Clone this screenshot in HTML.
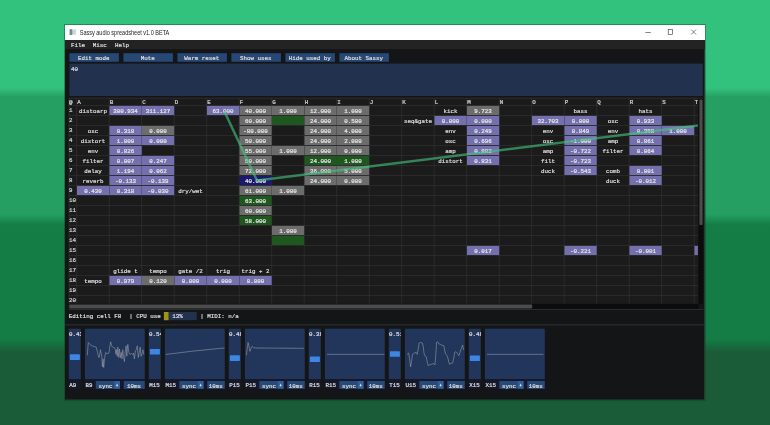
<!DOCTYPE html>
<html lang="en"><head><meta charset="utf-8"><title>Sassy audio spreadsheet v1.0 BETA</title>
<style>
html,body{margin:0;padding:0;background:#1b5c38;overflow:hidden}
svg{display:block;will-change:transform}
.m{font-family:"Liberation Mono","DejaVu Sans Mono",monospace;font-size:5.83px;stroke-width:0.22px}
.t{font-family:"Liberation Sans","DejaVu Sans",sans-serif;font-size:6.3px}
</style></head><body>
<svg width="770" height="425" viewBox="0 0 770 425">
<defs>
<linearGradient id="bg" x1="0" y1="0" x2="0" y2="425" gradientUnits="userSpaceOnUse">
<stop offset="0.0000" stop-color="#33c17e"/>
<stop offset="0.2071" stop-color="#33c17e"/>
<stop offset="0.2282" stop-color="#25a062"/>
<stop offset="0.5035" stop-color="#25a062"/>
<stop offset="0.5294" stop-color="#137d45"/>
<stop offset="0.7976" stop-color="#137d45"/>
<stop offset="0.8282" stop-color="#1b5c38"/>
<stop offset="1.0000" stop-color="#1b5c38"/>
</linearGradient>
<clipPath id="gridclip"><rect x="68.5" y="98" width="629.4" height="205.6"/></clipPath>
</defs>
<rect x="0.00" y="0.00" width="770.00" height="425.00" fill="url(#bg)"/>
<rect x="65.00" y="25.00" width="640.00" height="375.00" fill="#141517"/>
<rect x="704.50" y="40.00" width="0.50" height="360.00" fill="#3a6a50"/>
<rect x="65.00" y="399.50" width="640.00" height="0.50" fill="#2a4a38"/>
<rect x="64.5" y="24.5" width="640.8" height="375.8" fill="none" stroke="#0a3a22" stroke-opacity="0.45" stroke-width="0.9"/>
<rect x="65.00" y="25.00" width="640.00" height="15.10" fill="#ffffff"/>
<rect x="69.60" y="29.20" width="6.40" height="5.80" fill="#dfe6e6"/>
<rect x="69.60" y="29.20" width="2.60" height="5.80" fill="#6f8f8f"/>
<rect x="72.20" y="30.40" width="1.20" height="3.40" fill="#a8bcbc"/>
<rect x="74.40" y="29.60" width="1.00" height="5.00" fill="#c0cccc"/>
<text class="t" x="79.7" y="34.9" fill="#222" textLength="89.6" lengthAdjust="spacingAndGlyphs">Sassy audio spreadsheet v1.0 BETA</text>
<g stroke="#333" stroke-width="0.6" fill="none">
<line x1="645.4" y1="32.5" x2="650.8" y2="32.5"/>
<rect x="668.2" y="29.5" width="4.4" height="4.9"/>
<path d="M691.2 29.5 L696 34.5 M696 29.5 L691.2 34.5"/>
</g>
<rect x="65.00" y="40.10" width="640.00" height="9.10" fill="#232324"/>
<text class="m" x="70.90" y="46.70" fill="#dcdcdc" stroke="#dcdcdc">File</text>
<text class="m" x="92.80" y="46.70" fill="#dcdcdc" stroke="#dcdcdc">Misc</text>
<text class="m" x="115.00" y="46.70" fill="#dcdcdc" stroke="#dcdcdc">Help</text>
<rect x="69.40" y="53.20" width="49.50" height="8.60" fill="#274875"/>
<text class="m" x="93.75" y="59.50" text-anchor="middle" fill="#dcdcdc" stroke="#dcdcdc">Edit mode</text>
<rect x="123.40" y="53.20" width="49.50" height="8.60" fill="#274875"/>
<text class="m" x="147.75" y="59.50" text-anchor="middle" fill="#dcdcdc" stroke="#dcdcdc">Mute</text>
<rect x="177.40" y="53.20" width="49.50" height="8.60" fill="#274875"/>
<text class="m" x="201.75" y="59.50" text-anchor="middle" fill="#dcdcdc" stroke="#dcdcdc">Warm reset</text>
<rect x="231.40" y="53.20" width="49.50" height="8.60" fill="#274875"/>
<text class="m" x="255.75" y="59.50" text-anchor="middle" fill="#dcdcdc" stroke="#dcdcdc">Show uses</text>
<rect x="285.40" y="53.20" width="49.50" height="8.60" fill="#274875"/>
<text class="m" x="309.75" y="59.50" text-anchor="middle" fill="#dcdcdc" stroke="#dcdcdc">Hide used by</text>
<rect x="339.40" y="53.20" width="49.50" height="8.60" fill="#274875"/>
<text class="m" x="363.75" y="59.50" text-anchor="middle" fill="#dcdcdc" stroke="#dcdcdc">About Sassy</text>
<rect x="69.40" y="63.60" width="633.40" height="32.40" fill="#21314e"/>
<text class="m" x="70.90" y="71.40" fill="#dcdcdc" stroke="#dcdcdc">40</text>
<rect x="68.50" y="98.00" width="630.00" height="205.80" fill="#1b1b1c"/>
<rect x="698.60" y="98.00" width="4.40" height="205.80" fill="#0c0c0d"/>
<rect x="699.40" y="99.50" width="3.20" height="125.60" fill="#4c4c4c" rx="1"/>
<rect x="68.50" y="304.00" width="630.00" height="4.80" fill="#0c0c0d"/>
<rect x="69.20" y="304.50" width="463.00" height="3.90" fill="#4c4c4c" rx="1"/>
<path d="M703.2 98.1 L69.2 98.1 L69.2 309.5 L703.4 309.5" fill="none" stroke="#3c3c40" stroke-width="0.6"/>
<g clip-path="url(#gridclip)">
<g stroke="#3a3a3a" stroke-width="0.5">
<line x1="76.70" y1="98" x2="76.70" y2="304"/>
<line x1="109.20" y1="98" x2="109.20" y2="304"/>
<line x1="141.70" y1="98" x2="141.70" y2="304"/>
<line x1="174.20" y1="98" x2="174.20" y2="304"/>
<line x1="206.70" y1="98" x2="206.70" y2="304"/>
<line x1="239.20" y1="98" x2="239.20" y2="304"/>
<line x1="271.70" y1="98" x2="271.70" y2="304"/>
<line x1="304.20" y1="98" x2="304.20" y2="304"/>
<line x1="336.70" y1="98" x2="336.70" y2="304"/>
<line x1="369.20" y1="98" x2="369.20" y2="304"/>
<line x1="401.70" y1="98" x2="401.70" y2="304"/>
<line x1="434.20" y1="98" x2="434.20" y2="304"/>
<line x1="466.70" y1="98" x2="466.70" y2="304"/>
<line x1="499.20" y1="98" x2="499.20" y2="304"/>
<line x1="531.70" y1="98" x2="531.70" y2="304"/>
<line x1="564.20" y1="98" x2="564.20" y2="304"/>
<line x1="596.70" y1="98" x2="596.70" y2="304"/>
<line x1="629.20" y1="98" x2="629.20" y2="304"/>
<line x1="661.70" y1="98" x2="661.70" y2="304"/>
<line x1="694.20" y1="98" x2="694.20" y2="304"/>
<line x1="726.70" y1="98" x2="726.70" y2="304"/>
<line x1="68.5" y1="105.55" x2="698.5" y2="105.55"/>
<line x1="68.5" y1="115.55" x2="698.5" y2="115.55"/>
<line x1="68.5" y1="125.55" x2="698.5" y2="125.55"/>
<line x1="68.5" y1="135.55" x2="698.5" y2="135.55"/>
<line x1="68.5" y1="145.55" x2="698.5" y2="145.55"/>
<line x1="68.5" y1="155.55" x2="698.5" y2="155.55"/>
<line x1="68.5" y1="165.55" x2="698.5" y2="165.55"/>
<line x1="68.5" y1="175.55" x2="698.5" y2="175.55"/>
<line x1="68.5" y1="185.55" x2="698.5" y2="185.55"/>
<line x1="68.5" y1="195.55" x2="698.5" y2="195.55"/>
<line x1="68.5" y1="205.55" x2="698.5" y2="205.55"/>
<line x1="68.5" y1="215.55" x2="698.5" y2="215.55"/>
<line x1="68.5" y1="225.55" x2="698.5" y2="225.55"/>
<line x1="68.5" y1="235.55" x2="698.5" y2="235.55"/>
<line x1="68.5" y1="245.55" x2="698.5" y2="245.55"/>
<line x1="68.5" y1="255.55" x2="698.5" y2="255.55"/>
<line x1="68.5" y1="265.55" x2="698.5" y2="265.55"/>
<line x1="68.5" y1="275.55" x2="698.5" y2="275.55"/>
<line x1="68.5" y1="285.55" x2="698.5" y2="285.55"/>
<line x1="68.5" y1="295.55" x2="698.5" y2="295.55"/>
<line x1="68.5" y1="305.55" x2="698.5" y2="305.55"/>
<line x1="68.5" y1="315.55" x2="698.5" y2="315.55"/>
</g>
<text class="m" x="69.00" y="104.20" fill="#d0d0d0" stroke="#d0d0d0">@</text>
<text class="m" x="77.30" y="104.20" fill="#d0d0d0" stroke="#d0d0d0">A</text>
<text class="m" x="109.80" y="104.20" fill="#d0d0d0" stroke="#d0d0d0">B</text>
<text class="m" x="142.30" y="104.20" fill="#d0d0d0" stroke="#d0d0d0">C</text>
<text class="m" x="174.80" y="104.20" fill="#d0d0d0" stroke="#d0d0d0">D</text>
<text class="m" x="207.30" y="104.20" fill="#d0d0d0" stroke="#d0d0d0">E</text>
<text class="m" x="239.80" y="104.20" fill="#d0d0d0" stroke="#d0d0d0">F</text>
<text class="m" x="272.30" y="104.20" fill="#d0d0d0" stroke="#d0d0d0">G</text>
<text class="m" x="304.80" y="104.20" fill="#d0d0d0" stroke="#d0d0d0">H</text>
<text class="m" x="337.30" y="104.20" fill="#d0d0d0" stroke="#d0d0d0">I</text>
<text class="m" x="369.80" y="104.20" fill="#d0d0d0" stroke="#d0d0d0">J</text>
<text class="m" x="402.30" y="104.20" fill="#d0d0d0" stroke="#d0d0d0">K</text>
<text class="m" x="434.80" y="104.20" fill="#d0d0d0" stroke="#d0d0d0">L</text>
<text class="m" x="467.30" y="104.20" fill="#d0d0d0" stroke="#d0d0d0">M</text>
<text class="m" x="499.80" y="104.20" fill="#d0d0d0" stroke="#d0d0d0">N</text>
<text class="m" x="532.30" y="104.20" fill="#d0d0d0" stroke="#d0d0d0">O</text>
<text class="m" x="564.80" y="104.20" fill="#d0d0d0" stroke="#d0d0d0">P</text>
<text class="m" x="597.30" y="104.20" fill="#d0d0d0" stroke="#d0d0d0">Q</text>
<text class="m" x="629.80" y="104.20" fill="#d0d0d0" stroke="#d0d0d0">R</text>
<text class="m" x="662.30" y="104.20" fill="#d0d0d0" stroke="#d0d0d0">S</text>
<text class="m" x="694.80" y="104.20" fill="#d0d0d0" stroke="#d0d0d0">T</text>
<text class="m" x="69.00" y="112.30" fill="#d0d0d0" stroke="#d0d0d0">1</text>
<text class="m" x="69.00" y="122.30" fill="#d0d0d0" stroke="#d0d0d0">2</text>
<text class="m" x="69.00" y="132.30" fill="#d0d0d0" stroke="#d0d0d0">3</text>
<text class="m" x="69.00" y="142.30" fill="#d0d0d0" stroke="#d0d0d0">4</text>
<text class="m" x="69.00" y="152.30" fill="#d0d0d0" stroke="#d0d0d0">5</text>
<text class="m" x="69.00" y="162.30" fill="#d0d0d0" stroke="#d0d0d0">6</text>
<text class="m" x="69.00" y="172.30" fill="#d0d0d0" stroke="#d0d0d0">7</text>
<text class="m" x="69.00" y="182.30" fill="#d0d0d0" stroke="#d0d0d0">8</text>
<text class="m" x="69.00" y="192.30" fill="#d0d0d0" stroke="#d0d0d0">9</text>
<text class="m" x="68.90" y="202.30" fill="#d0d0d0" stroke="#d0d0d0" textLength="7.0" lengthAdjust="spacingAndGlyphs">10</text>
<text class="m" x="68.90" y="212.30" fill="#d0d0d0" stroke="#d0d0d0" textLength="7.0" lengthAdjust="spacingAndGlyphs">11</text>
<text class="m" x="68.90" y="222.30" fill="#d0d0d0" stroke="#d0d0d0" textLength="7.0" lengthAdjust="spacingAndGlyphs">12</text>
<text class="m" x="68.90" y="232.30" fill="#d0d0d0" stroke="#d0d0d0" textLength="7.0" lengthAdjust="spacingAndGlyphs">13</text>
<text class="m" x="68.90" y="242.30" fill="#d0d0d0" stroke="#d0d0d0" textLength="7.0" lengthAdjust="spacingAndGlyphs">14</text>
<text class="m" x="68.90" y="252.30" fill="#d0d0d0" stroke="#d0d0d0" textLength="7.0" lengthAdjust="spacingAndGlyphs">15</text>
<text class="m" x="68.90" y="262.30" fill="#d0d0d0" stroke="#d0d0d0" textLength="7.0" lengthAdjust="spacingAndGlyphs">16</text>
<text class="m" x="68.90" y="272.30" fill="#d0d0d0" stroke="#d0d0d0" textLength="7.0" lengthAdjust="spacingAndGlyphs">17</text>
<text class="m" x="68.90" y="282.30" fill="#d0d0d0" stroke="#d0d0d0" textLength="7.0" lengthAdjust="spacingAndGlyphs">18</text>
<text class="m" x="68.90" y="292.30" fill="#d0d0d0" stroke="#d0d0d0" textLength="7.0" lengthAdjust="spacingAndGlyphs">19</text>
<text class="m" x="68.90" y="302.30" fill="#d0d0d0" stroke="#d0d0d0" textLength="7.0" lengthAdjust="spacingAndGlyphs">20</text>
<rect x="109.45" y="105.90" width="32.25" height="9.10" fill="#7470ae"/>
<rect x="141.95" y="105.90" width="32.25" height="9.10" fill="#7470ae"/>
<rect x="206.95" y="105.90" width="32.25" height="9.10" fill="#7470ae"/>
<rect x="239.45" y="105.90" width="32.25" height="9.10" fill="#6c6c6c"/>
<rect x="271.95" y="105.90" width="32.25" height="9.10" fill="#6c6c6c"/>
<rect x="304.45" y="105.90" width="32.25" height="9.10" fill="#6c6c6c"/>
<rect x="336.95" y="105.90" width="32.25" height="9.10" fill="#6c6c6c"/>
<rect x="466.95" y="105.90" width="32.25" height="9.10" fill="#6c6c6c"/>
<rect x="239.45" y="115.90" width="32.25" height="9.10" fill="#6c6c6c"/>
<rect x="271.95" y="115.90" width="32.25" height="9.10" fill="#1f581f"/>
<rect x="304.45" y="115.90" width="32.25" height="9.10" fill="#6c6c6c"/>
<rect x="336.95" y="115.90" width="32.25" height="9.10" fill="#6c6c6c"/>
<rect x="434.45" y="115.90" width="32.25" height="9.10" fill="#7470ae"/>
<rect x="466.95" y="115.90" width="32.25" height="9.10" fill="#7470ae"/>
<rect x="531.95" y="115.90" width="32.25" height="9.10" fill="#7470ae"/>
<rect x="564.45" y="115.90" width="32.25" height="9.10" fill="#7470ae"/>
<rect x="629.45" y="115.90" width="32.25" height="9.10" fill="#7470ae"/>
<rect x="109.45" y="125.90" width="32.25" height="9.10" fill="#7470ae"/>
<rect x="141.95" y="125.90" width="32.25" height="9.10" fill="#6c6c6c"/>
<rect x="239.45" y="125.90" width="32.25" height="9.10" fill="#6c6c6c"/>
<rect x="304.45" y="125.90" width="32.25" height="9.10" fill="#6c6c6c"/>
<rect x="336.95" y="125.90" width="32.25" height="9.10" fill="#6c6c6c"/>
<rect x="466.95" y="125.90" width="32.25" height="9.10" fill="#7470ae"/>
<rect x="564.45" y="125.90" width="32.25" height="9.10" fill="#7470ae"/>
<rect x="629.45" y="125.90" width="32.25" height="9.10" fill="#7470ae"/>
<rect x="661.95" y="125.90" width="32.25" height="9.10" fill="#7470ae"/>
<rect x="109.45" y="135.90" width="32.25" height="9.10" fill="#7470ae"/>
<rect x="141.95" y="135.90" width="32.25" height="9.10" fill="#7470ae"/>
<rect x="239.45" y="135.90" width="32.25" height="9.10" fill="#6c6c6c"/>
<rect x="304.45" y="135.90" width="32.25" height="9.10" fill="#6c6c6c"/>
<rect x="336.95" y="135.90" width="32.25" height="9.10" fill="#6c6c6c"/>
<rect x="466.95" y="135.90" width="32.25" height="9.10" fill="#7470ae"/>
<rect x="564.45" y="135.90" width="32.25" height="9.10" fill="#7470ae"/>
<rect x="629.45" y="135.90" width="32.25" height="9.10" fill="#7470ae"/>
<rect x="109.45" y="145.90" width="32.25" height="9.10" fill="#7470ae"/>
<rect x="239.45" y="145.90" width="32.25" height="9.10" fill="#6c6c6c"/>
<rect x="271.95" y="145.90" width="32.25" height="9.10" fill="#6c6c6c"/>
<rect x="304.45" y="145.90" width="32.25" height="9.10" fill="#6c6c6c"/>
<rect x="336.95" y="145.90" width="32.25" height="9.10" fill="#6c6c6c"/>
<rect x="466.95" y="145.90" width="32.25" height="9.10" fill="#7470ae"/>
<rect x="564.45" y="145.90" width="32.25" height="9.10" fill="#7470ae"/>
<rect x="629.45" y="145.90" width="32.25" height="9.10" fill="#7470ae"/>
<rect x="109.45" y="155.90" width="32.25" height="9.10" fill="#7470ae"/>
<rect x="141.95" y="155.90" width="32.25" height="9.10" fill="#7470ae"/>
<rect x="239.45" y="155.90" width="32.25" height="9.10" fill="#6c6c6c"/>
<rect x="304.45" y="155.90" width="32.60" height="9.10" fill="#1f581f"/>
<rect x="336.95" y="155.90" width="32.25" height="9.10" fill="#1f581f"/>
<rect x="466.95" y="155.90" width="32.25" height="9.10" fill="#7470ae"/>
<rect x="564.45" y="155.90" width="32.25" height="9.10" fill="#7470ae"/>
<rect x="109.45" y="165.90" width="32.25" height="9.10" fill="#7470ae"/>
<rect x="141.95" y="165.90" width="32.25" height="9.10" fill="#7470ae"/>
<rect x="239.45" y="165.90" width="32.25" height="9.10" fill="#6c6c6c"/>
<rect x="304.45" y="165.90" width="32.25" height="9.10" fill="#6c6c6c"/>
<rect x="336.95" y="165.90" width="32.25" height="9.10" fill="#6c6c6c"/>
<rect x="564.45" y="165.90" width="32.25" height="9.10" fill="#7470ae"/>
<rect x="629.45" y="165.90" width="32.25" height="9.10" fill="#7470ae"/>
<rect x="109.45" y="175.90" width="32.25" height="9.10" fill="#7470ae"/>
<rect x="141.95" y="175.90" width="32.25" height="9.10" fill="#7470ae"/>
<rect x="239.45" y="175.90" width="32.25" height="9.10" fill="#1b1870"/>
<rect x="304.45" y="175.90" width="32.25" height="9.10" fill="#6c6c6c"/>
<rect x="336.95" y="175.90" width="32.25" height="9.10" fill="#6c6c6c"/>
<rect x="629.45" y="175.90" width="32.25" height="9.10" fill="#7470ae"/>
<rect x="76.95" y="185.90" width="32.25" height="9.10" fill="#7470ae"/>
<rect x="109.45" y="185.90" width="32.25" height="9.10" fill="#7470ae"/>
<rect x="141.95" y="185.90" width="32.25" height="9.10" fill="#7470ae"/>
<rect x="239.45" y="185.90" width="32.25" height="9.10" fill="#6c6c6c"/>
<rect x="271.95" y="185.90" width="32.25" height="9.10" fill="#6c6c6c"/>
<rect x="239.45" y="195.90" width="32.25" height="9.10" fill="#1f581f"/>
<rect x="239.45" y="205.90" width="32.25" height="9.10" fill="#6c6c6c"/>
<rect x="239.45" y="215.90" width="32.25" height="9.10" fill="#1f581f"/>
<rect x="271.95" y="225.90" width="32.25" height="9.10" fill="#6c6c6c"/>
<rect x="271.95" y="235.90" width="32.25" height="9.10" fill="#1f581f"/>
<rect x="466.95" y="245.90" width="32.25" height="9.10" fill="#7470ae"/>
<rect x="564.45" y="245.90" width="32.25" height="9.10" fill="#7470ae"/>
<rect x="629.45" y="245.90" width="32.25" height="9.10" fill="#7470ae"/>
<rect x="694.45" y="245.90" width="32.25" height="9.10" fill="#7470ae"/>
<rect x="109.45" y="275.90" width="32.25" height="9.10" fill="#7470ae"/>
<rect x="141.95" y="275.90" width="32.25" height="9.10" fill="#6c6c6c"/>
<rect x="174.45" y="275.90" width="32.25" height="9.10" fill="#7470ae"/>
<rect x="206.95" y="275.90" width="32.25" height="9.10" fill="#7470ae"/>
<rect x="239.45" y="275.90" width="32.25" height="9.10" fill="#7470ae"/>
<text class="m" x="93.00" y="113.00" text-anchor="middle" fill="#dadada" stroke="#dadada">distoarp</text>
<text class="m" x="125.50" y="113.00" text-anchor="middle" fill="#e4e4e4" stroke="#e4e4e4">300.934</text>
<text class="m" x="158.00" y="113.00" text-anchor="middle" fill="#e4e4e4" stroke="#e4e4e4">311.127</text>
<text class="m" x="223.00" y="113.00" text-anchor="middle" fill="#e4e4e4" stroke="#e4e4e4">63.000</text>
<text class="m" x="255.50" y="113.00" text-anchor="middle" fill="#e4e4e4" stroke="#e4e4e4">40.000</text>
<text class="m" x="288.00" y="113.00" text-anchor="middle" fill="#e4e4e4" stroke="#e4e4e4">1.000</text>
<text class="m" x="320.50" y="113.00" text-anchor="middle" fill="#e4e4e4" stroke="#e4e4e4">12.000</text>
<text class="m" x="353.00" y="113.00" text-anchor="middle" fill="#e4e4e4" stroke="#e4e4e4">1.000</text>
<text class="m" x="450.50" y="113.00" text-anchor="middle" fill="#dadada" stroke="#dadada">kick</text>
<text class="m" x="483.00" y="113.00" text-anchor="middle" fill="#e4e4e4" stroke="#e4e4e4">9.723</text>
<text class="m" x="580.50" y="113.00" text-anchor="middle" fill="#dadada" stroke="#dadada">bass</text>
<text class="m" x="645.50" y="113.00" text-anchor="middle" fill="#dadada" stroke="#dadada">hats</text>
<text class="m" x="255.50" y="123.00" text-anchor="middle" fill="#e4e4e4" stroke="#e4e4e4">60.000</text>
<text class="m" x="320.50" y="123.00" text-anchor="middle" fill="#e4e4e4" stroke="#e4e4e4">24.000</text>
<text class="m" x="353.00" y="123.00" text-anchor="middle" fill="#e4e4e4" stroke="#e4e4e4">0.500</text>
<text class="m" x="418.00" y="123.00" text-anchor="middle" fill="#dadada" stroke="#dadada">seq&amp;gate</text>
<text class="m" x="450.50" y="123.00" text-anchor="middle" fill="#e4e4e4" stroke="#e4e4e4">0.000</text>
<text class="m" x="483.00" y="123.00" text-anchor="middle" fill="#e4e4e4" stroke="#e4e4e4">0.000</text>
<text class="m" x="548.00" y="123.00" text-anchor="middle" fill="#e4e4e4" stroke="#e4e4e4">32.703</text>
<text class="m" x="580.50" y="123.00" text-anchor="middle" fill="#e4e4e4" stroke="#e4e4e4">0.000</text>
<text class="m" x="613.00" y="123.00" text-anchor="middle" fill="#dadada" stroke="#dadada">osc</text>
<text class="m" x="645.50" y="123.00" text-anchor="middle" fill="#e4e4e4" stroke="#e4e4e4">0.933</text>
<text class="m" x="93.00" y="133.00" text-anchor="middle" fill="#dadada" stroke="#dadada">osc</text>
<text class="m" x="125.50" y="133.00" text-anchor="middle" fill="#e4e4e4" stroke="#e4e4e4">0.318</text>
<text class="m" x="158.00" y="133.00" text-anchor="middle" fill="#e4e4e4" stroke="#e4e4e4">0.000</text>
<text class="m" x="255.50" y="133.00" text-anchor="middle" fill="#e4e4e4" stroke="#e4e4e4">-80.000</text>
<text class="m" x="320.50" y="133.00" text-anchor="middle" fill="#e4e4e4" stroke="#e4e4e4">24.000</text>
<text class="m" x="353.00" y="133.00" text-anchor="middle" fill="#e4e4e4" stroke="#e4e4e4">4.000</text>
<text class="m" x="450.50" y="133.00" text-anchor="middle" fill="#dadada" stroke="#dadada">env</text>
<text class="m" x="483.00" y="133.00" text-anchor="middle" fill="#e4e4e4" stroke="#e4e4e4">0.249</text>
<text class="m" x="548.00" y="133.00" text-anchor="middle" fill="#dadada" stroke="#dadada">env</text>
<text class="m" x="580.50" y="133.00" text-anchor="middle" fill="#e4e4e4" stroke="#e4e4e4">0.849</text>
<text class="m" x="613.00" y="133.00" text-anchor="middle" fill="#dadada" stroke="#dadada">env</text>
<text class="m" x="645.50" y="133.00" text-anchor="middle" fill="#e4e4e4" stroke="#e4e4e4">0.358</text>
<text class="m" x="678.00" y="133.00" text-anchor="middle" fill="#e4e4e4" stroke="#e4e4e4">1.000</text>
<text class="m" x="93.00" y="143.00" text-anchor="middle" fill="#dadada" stroke="#dadada">distort</text>
<text class="m" x="125.50" y="143.00" text-anchor="middle" fill="#e4e4e4" stroke="#e4e4e4">1.000</text>
<text class="m" x="158.00" y="143.00" text-anchor="middle" fill="#e4e4e4" stroke="#e4e4e4">0.000</text>
<text class="m" x="255.50" y="143.00" text-anchor="middle" fill="#e4e4e4" stroke="#e4e4e4">50.000</text>
<text class="m" x="320.50" y="143.00" text-anchor="middle" fill="#e4e4e4" stroke="#e4e4e4">24.000</text>
<text class="m" x="353.00" y="143.00" text-anchor="middle" fill="#e4e4e4" stroke="#e4e4e4">2.000</text>
<text class="m" x="450.50" y="143.00" text-anchor="middle" fill="#dadada" stroke="#dadada">osc</text>
<text class="m" x="483.00" y="143.00" text-anchor="middle" fill="#e4e4e4" stroke="#e4e4e4">0.696</text>
<text class="m" x="548.00" y="143.00" text-anchor="middle" fill="#dadada" stroke="#dadada">osc</text>
<text class="m" x="580.50" y="143.00" text-anchor="middle" fill="#e4e4e4" stroke="#e4e4e4">-1.000</text>
<text class="m" x="613.00" y="143.00" text-anchor="middle" fill="#dadada" stroke="#dadada">amp</text>
<text class="m" x="645.50" y="143.00" text-anchor="middle" fill="#e4e4e4" stroke="#e4e4e4">0.861</text>
<text class="m" x="93.00" y="153.00" text-anchor="middle" fill="#dadada" stroke="#dadada">env</text>
<text class="m" x="125.50" y="153.00" text-anchor="middle" fill="#e4e4e4" stroke="#e4e4e4">0.826</text>
<text class="m" x="255.50" y="153.00" text-anchor="middle" fill="#e4e4e4" stroke="#e4e4e4">55.000</text>
<text class="m" x="288.00" y="153.00" text-anchor="middle" fill="#e4e4e4" stroke="#e4e4e4">1.000</text>
<text class="m" x="320.50" y="153.00" text-anchor="middle" fill="#e4e4e4" stroke="#e4e4e4">12.000</text>
<text class="m" x="353.00" y="153.00" text-anchor="middle" fill="#e4e4e4" stroke="#e4e4e4">0.000</text>
<text class="m" x="450.50" y="153.00" text-anchor="middle" fill="#dadada" stroke="#dadada">amp</text>
<text class="m" x="483.00" y="153.00" text-anchor="middle" fill="#e4e4e4" stroke="#e4e4e4">0.882</text>
<text class="m" x="548.00" y="153.00" text-anchor="middle" fill="#dadada" stroke="#dadada">amp</text>
<text class="m" x="580.50" y="153.00" text-anchor="middle" fill="#e4e4e4" stroke="#e4e4e4">-0.722</text>
<text class="m" x="613.00" y="153.00" text-anchor="middle" fill="#dadada" stroke="#dadada">filter</text>
<text class="m" x="645.50" y="153.00" text-anchor="middle" fill="#e4e4e4" stroke="#e4e4e4">0.064</text>
<text class="m" x="93.00" y="163.00" text-anchor="middle" fill="#dadada" stroke="#dadada">filter</text>
<text class="m" x="125.50" y="163.00" text-anchor="middle" fill="#e4e4e4" stroke="#e4e4e4">0.007</text>
<text class="m" x="158.00" y="163.00" text-anchor="middle" fill="#e4e4e4" stroke="#e4e4e4">0.247</text>
<text class="m" x="255.50" y="163.00" text-anchor="middle" fill="#e4e4e4" stroke="#e4e4e4">50.000</text>
<text class="m" x="320.50" y="163.00" text-anchor="middle" fill="#e4e4e4" stroke="#e4e4e4">24.000</text>
<text class="m" x="353.00" y="163.00" text-anchor="middle" fill="#e4e4e4" stroke="#e4e4e4">1.000</text>
<text class="m" x="450.50" y="163.00" text-anchor="middle" fill="#dadada" stroke="#dadada">distort</text>
<text class="m" x="483.00" y="163.00" text-anchor="middle" fill="#e4e4e4" stroke="#e4e4e4">0.831</text>
<text class="m" x="548.00" y="163.00" text-anchor="middle" fill="#dadada" stroke="#dadada">filt</text>
<text class="m" x="580.50" y="163.00" text-anchor="middle" fill="#e4e4e4" stroke="#e4e4e4">-0.723</text>
<text class="m" x="93.00" y="173.00" text-anchor="middle" fill="#dadada" stroke="#dadada">delay</text>
<text class="m" x="125.50" y="173.00" text-anchor="middle" fill="#e4e4e4" stroke="#e4e4e4">1.194</text>
<text class="m" x="158.00" y="173.00" text-anchor="middle" fill="#e4e4e4" stroke="#e4e4e4">0.062</text>
<text class="m" x="255.50" y="173.00" text-anchor="middle" fill="#e4e4e4" stroke="#e4e4e4">72.000</text>
<text class="m" x="320.50" y="173.00" text-anchor="middle" fill="#e4e4e4" stroke="#e4e4e4">36.000</text>
<text class="m" x="353.00" y="173.00" text-anchor="middle" fill="#e4e4e4" stroke="#e4e4e4">5.000</text>
<text class="m" x="548.00" y="173.00" text-anchor="middle" fill="#dadada" stroke="#dadada">duck</text>
<text class="m" x="580.50" y="173.00" text-anchor="middle" fill="#e4e4e4" stroke="#e4e4e4">-0.543</text>
<text class="m" x="613.00" y="173.00" text-anchor="middle" fill="#dadada" stroke="#dadada">comb</text>
<text class="m" x="645.50" y="173.00" text-anchor="middle" fill="#e4e4e4" stroke="#e4e4e4">0.001</text>
<text class="m" x="93.00" y="183.00" text-anchor="middle" fill="#dadada" stroke="#dadada">reverb</text>
<text class="m" x="125.50" y="183.00" text-anchor="middle" fill="#e4e4e4" stroke="#e4e4e4">-0.133</text>
<text class="m" x="158.00" y="183.00" text-anchor="middle" fill="#e4e4e4" stroke="#e4e4e4">-0.139</text>
<text class="m" x="255.50" y="183.00" text-anchor="middle" fill="#e4e4e4" stroke="#e4e4e4">40.000</text>
<text class="m" x="320.50" y="183.00" text-anchor="middle" fill="#e4e4e4" stroke="#e4e4e4">24.000</text>
<text class="m" x="353.00" y="183.00" text-anchor="middle" fill="#e4e4e4" stroke="#e4e4e4">0.000</text>
<text class="m" x="613.00" y="183.00" text-anchor="middle" fill="#dadada" stroke="#dadada">duck</text>
<text class="m" x="645.50" y="183.00" text-anchor="middle" fill="#e4e4e4" stroke="#e4e4e4">-0.012</text>
<text class="m" x="93.00" y="193.00" text-anchor="middle" fill="#e4e4e4" stroke="#e4e4e4">0.430</text>
<text class="m" x="125.50" y="193.00" text-anchor="middle" fill="#e4e4e4" stroke="#e4e4e4">0.318</text>
<text class="m" x="158.00" y="193.00" text-anchor="middle" fill="#e4e4e4" stroke="#e4e4e4">-0.030</text>
<text class="m" x="190.50" y="193.00" text-anchor="middle" fill="#dadada" stroke="#dadada">dry/wet</text>
<text class="m" x="255.50" y="193.00" text-anchor="middle" fill="#e4e4e4" stroke="#e4e4e4">61.000</text>
<text class="m" x="288.00" y="193.00" text-anchor="middle" fill="#e4e4e4" stroke="#e4e4e4">1.000</text>
<text class="m" x="255.50" y="203.00" text-anchor="middle" fill="#e4e4e4" stroke="#e4e4e4">63.000</text>
<text class="m" x="255.50" y="213.00" text-anchor="middle" fill="#e4e4e4" stroke="#e4e4e4">60.000</text>
<text class="m" x="255.50" y="223.00" text-anchor="middle" fill="#e4e4e4" stroke="#e4e4e4">58.000</text>
<text class="m" x="288.00" y="233.00" text-anchor="middle" fill="#e4e4e4" stroke="#e4e4e4">1.000</text>
<text class="m" x="483.00" y="253.00" text-anchor="middle" fill="#e4e4e4" stroke="#e4e4e4">0.017</text>
<text class="m" x="580.50" y="253.00" text-anchor="middle" fill="#e4e4e4" stroke="#e4e4e4">-0.221</text>
<text class="m" x="645.50" y="253.00" text-anchor="middle" fill="#e4e4e4" stroke="#e4e4e4">-0.001</text>
<text class="m" x="710.50" y="253.00" text-anchor="middle" fill="#e4e4e4" stroke="#e4e4e4">0.000</text>
<text class="m" x="125.50" y="273.00" text-anchor="middle" fill="#dadada" stroke="#dadada">glide t</text>
<text class="m" x="158.00" y="273.00" text-anchor="middle" fill="#dadada" stroke="#dadada">tempo</text>
<text class="m" x="190.50" y="273.00" text-anchor="middle" fill="#dadada" stroke="#dadada">gate /2</text>
<text class="m" x="223.00" y="273.00" text-anchor="middle" fill="#dadada" stroke="#dadada">trig</text>
<text class="m" x="255.50" y="273.00" text-anchor="middle" fill="#dadada" stroke="#dadada">trig + 2</text>
<text class="m" x="93.00" y="283.00" text-anchor="middle" fill="#dadada" stroke="#dadada">tempo</text>
<text class="m" x="125.50" y="283.00" text-anchor="middle" fill="#e4e4e4" stroke="#e4e4e4">0.979</text>
<text class="m" x="158.00" y="283.00" text-anchor="middle" fill="#e4e4e4" stroke="#e4e4e4">0.120</text>
<text class="m" x="190.50" y="283.00" text-anchor="middle" fill="#e4e4e4" stroke="#e4e4e4">0.000</text>
<text class="m" x="223.00" y="283.00" text-anchor="middle" fill="#e4e4e4" stroke="#e4e4e4">0.000</text>
<text class="m" x="255.50" y="283.00" text-anchor="middle" fill="#e4e4e4" stroke="#e4e4e4">0.000</text>
<g stroke="#44c47c" stroke-opacity="0.62" stroke-width="2.5" fill="none" stroke-linecap="butt" stroke-linejoin="round">
<path d="M224.3 111.3 L257.0 180.5 L699.7 125.3"/>
</g>
</g>
<text class="m" x="68.80" y="318.30" fill="#dcdcdc" stroke="#dcdcdc">Editing cell F8</text>
<text class="m" x="129.20" y="318.30" fill="#dcdcdc" stroke="#dcdcdc">| CPU use</text>
<rect x="163.90" y="312.00" width="32.80" height="8.20" fill="#21314e"/>
<rect x="163.90" y="312.00" width="4.60" height="8.20" fill="#a39410"/>
<text class="m" x="172.30" y="318.30" fill="#dcdcdc" stroke="#dcdcdc">13%</text>
<text class="m" x="200.30" y="318.30" fill="#dcdcdc" stroke="#dcdcdc">| MIDI: n/a</text>
<rect x="65.00" y="324.20" width="639.60" height="1.30" fill="#2a2b2f"/>
<rect x="68.70" y="328.70" width="12.10" height="50.60" fill="#22355b"/>
<rect x="84.90" y="328.70" width="59.90" height="50.60" fill="#22355b"/>
<svg x="68.70" y="328.7" width="12.1" height="12" viewBox="0 0 12.1 12" overflow="hidden">
<text class="m" x="0.30" y="6.90" fill="#dcdcdc" stroke="#dcdcdc">0.43</text>
</svg>
<rect x="69.90" y="354.30" width="10.00" height="5.60" fill="#3d86e4" rx="0.6"/>
<g stroke="#a0a4aa" stroke-width="0.65" fill="none" stroke-linejoin="round" stroke-linecap="round" stroke-opacity="0.85">
<polyline points="87.3,355.0 88.3,342.5 89.9,344.4 91.9,345.8 95.2,346.8 96.2,347.1 97.5,352.4 98.9,357.6 99.8,354.3 100.4,349.7 101.8,356.3 102.4,366.8 103.1,358.9 103.7,367.5 104.7,357.6 105.7,352.4 107.0,353.7 109.0,353.0 109.9,345.8 110.7,341.8 111.6,345.8 112.6,347.1 114.3,347.7 115.2,349.1 116.0,354.3 116.5,349.7 117.3,356.3 117.8,347.1 118.9,357.6 119.5,349.1 120.5,357.6 121.3,352.4 121.9,358.9 122.8,349.7 123.5,356.3 124.4,361.6 125.2,352.4 126.1,345.8 126.8,356.3 127.8,344.4 128.8,352.4 129.7,354.3 131.4,353.7 132.7,354.3 133.6,353.0 134.4,358.9 135.4,351.0 136.3,349.7 137.3,345.8 138.3,357.6 139.3,352.4 140.2,347.1 141.0,356.3 141.9,353.7 142.9,349.7 143.7,354.3"/>
</g>
<rect x="68.70" y="379.40" width="12.10" height="9.80" fill="#16182a"/>
<rect x="84.90" y="379.40" width="59.90" height="9.80" fill="#16182a"/>
<text class="m" x="69.30" y="386.80" fill="#dcdcdc" stroke="#dcdcdc">A9</text>
<text class="m" x="85.40" y="386.80" fill="#dcdcdc" stroke="#dcdcdc">B9</text>
<rect x="95.80" y="381.00" width="24.20" height="7.80" fill="#274a7a"/>
<text class="m" x="98.50" y="387.50" fill="#dcdcdc" stroke="#dcdcdc">sync</text>
<rect x="114.20" y="381.00" width="5.80" height="7.80" fill="#30609c"/>
<path d="M115.9 386.2 L117.1 383.4 L118.3 386.2 Z" fill="#dcdcdc"/>
<rect x="123.80" y="381.00" width="21.00" height="7.80" fill="#274a7a"/>
<text class="m" x="134.00" y="387.50" text-anchor="middle" fill="#dcdcdc" stroke="#dcdcdc">10ms</text>
<rect x="148.70" y="328.70" width="12.10" height="50.60" fill="#22355b"/>
<rect x="164.90" y="328.70" width="59.90" height="50.60" fill="#22355b"/>
<svg x="148.70" y="328.7" width="12.1" height="12" viewBox="0 0 12.1 12" overflow="hidden">
<text class="m" x="0.30" y="6.90" fill="#dcdcdc" stroke="#dcdcdc">0.54</text>
</svg>
<rect x="149.90" y="349.00" width="10.00" height="5.60" fill="#3d86e4" rx="0.6"/>
<g stroke="#a0a4aa" stroke-width="0.65" fill="none" stroke-linejoin="round" stroke-linecap="round" stroke-opacity="0.85">
<path d="M166.1 354.4 Q194.9 350.6 224.1 348.0"/>
</g>
<rect x="148.70" y="379.40" width="12.10" height="9.80" fill="#16182a"/>
<rect x="164.90" y="379.40" width="59.90" height="9.80" fill="#16182a"/>
<text class="m" x="149.30" y="386.80" fill="#dcdcdc" stroke="#dcdcdc">M15</text>
<text class="m" x="165.40" y="386.80" fill="#dcdcdc" stroke="#dcdcdc">M15</text>
<rect x="179.30" y="381.00" width="24.20" height="7.80" fill="#274a7a"/>
<text class="m" x="182.00" y="387.50" fill="#dcdcdc" stroke="#dcdcdc">sync</text>
<rect x="197.70" y="381.00" width="5.80" height="7.80" fill="#30609c"/>
<path d="M199.4 386.2 L200.6 383.4 L201.8 386.2 Z" fill="#dcdcdc"/>
<rect x="207.30" y="381.00" width="17.50" height="7.80" fill="#274a7a"/>
<text class="m" x="215.75" y="387.50" text-anchor="middle" fill="#dcdcdc" stroke="#dcdcdc">10ms</text>
<rect x="228.70" y="328.70" width="12.10" height="50.60" fill="#22355b"/>
<rect x="244.90" y="328.70" width="59.90" height="50.60" fill="#22355b"/>
<svg x="228.70" y="328.7" width="12.1" height="12" viewBox="0 0 12.1 12" overflow="hidden">
<text class="m" x="0.30" y="6.90" fill="#dcdcdc" stroke="#dcdcdc">0.48</text>
</svg>
<rect x="229.90" y="355.30" width="10.00" height="5.60" fill="#3d86e4" rx="0.6"/>
<g stroke="#a0a4aa" stroke-width="0.65" fill="none" stroke-linejoin="round" stroke-linecap="round" stroke-opacity="0.85">
<path d="M246.5 355.0 L247.1 349 L248.1 342.6 L249.1 347 L249.9 351.4 L251.1 348.4 L252.1 346.4 L253.5 347.6 L255.9 348.0 L303.5 348.3"/>
</g>
<rect x="228.70" y="379.40" width="12.10" height="9.80" fill="#16182a"/>
<rect x="244.90" y="379.40" width="59.90" height="9.80" fill="#16182a"/>
<text class="m" x="229.30" y="386.80" fill="#dcdcdc" stroke="#dcdcdc">P15</text>
<text class="m" x="245.40" y="386.80" fill="#dcdcdc" stroke="#dcdcdc">P15</text>
<rect x="259.30" y="381.00" width="24.20" height="7.80" fill="#274a7a"/>
<text class="m" x="262.00" y="387.50" fill="#dcdcdc" stroke="#dcdcdc">sync</text>
<rect x="277.70" y="381.00" width="5.80" height="7.80" fill="#30609c"/>
<path d="M279.4 386.2 L280.6 383.4 L281.8 386.2 Z" fill="#dcdcdc"/>
<rect x="287.30" y="381.00" width="17.50" height="7.80" fill="#274a7a"/>
<text class="m" x="295.75" y="387.50" text-anchor="middle" fill="#dcdcdc" stroke="#dcdcdc">10ms</text>
<rect x="308.70" y="328.70" width="12.10" height="50.60" fill="#22355b"/>
<rect x="324.90" y="328.70" width="59.90" height="50.60" fill="#22355b"/>
<svg x="308.70" y="328.7" width="12.1" height="12" viewBox="0 0 12.1 12" overflow="hidden">
<text class="m" x="0.30" y="6.90" fill="#dcdcdc" stroke="#dcdcdc">0.38</text>
</svg>
<rect x="309.90" y="356.40" width="10.00" height="5.60" fill="#3d86e4" rx="0.6"/>
<g stroke="#a0a4aa" stroke-width="0.65" fill="none" stroke-linejoin="round" stroke-linecap="round" stroke-opacity="0.85">
<path d="M327.3 354.3 L384.1 354.3"/>
</g>
<rect x="308.70" y="379.40" width="12.10" height="9.80" fill="#16182a"/>
<rect x="324.90" y="379.40" width="59.90" height="9.80" fill="#16182a"/>
<text class="m" x="309.30" y="386.80" fill="#dcdcdc" stroke="#dcdcdc">R15</text>
<text class="m" x="325.40" y="386.80" fill="#dcdcdc" stroke="#dcdcdc">R15</text>
<rect x="339.30" y="381.00" width="24.20" height="7.80" fill="#274a7a"/>
<text class="m" x="342.00" y="387.50" fill="#dcdcdc" stroke="#dcdcdc">sync</text>
<rect x="357.70" y="381.00" width="5.80" height="7.80" fill="#30609c"/>
<path d="M359.4 386.2 L360.6 383.4 L361.8 386.2 Z" fill="#dcdcdc"/>
<rect x="367.30" y="381.00" width="17.50" height="7.80" fill="#274a7a"/>
<text class="m" x="375.75" y="387.50" text-anchor="middle" fill="#dcdcdc" stroke="#dcdcdc">10ms</text>
<rect x="388.70" y="328.70" width="12.10" height="50.60" fill="#22355b"/>
<rect x="404.90" y="328.70" width="59.90" height="50.60" fill="#22355b"/>
<svg x="388.70" y="328.7" width="12.1" height="12" viewBox="0 0 12.1 12" overflow="hidden">
<text class="m" x="0.30" y="6.90" fill="#dcdcdc" stroke="#dcdcdc">0.51</text>
</svg>
<rect x="389.90" y="351.20" width="10.00" height="5.60" fill="#3d86e4" rx="0.6"/>
<g stroke="#a0a4aa" stroke-width="0.65" fill="none" stroke-linejoin="round" stroke-linecap="round" stroke-opacity="0.85">
<polyline points="407.3,354.3 408.6,353.0 409.6,358.9 410.6,366.8 411.5,361.6 412.5,354.3 414.5,353.0 416.2,352.4 417.2,354.3 418.1,349.7 419.1,343.1 420.4,342.5 422.4,343.1 423.3,347.1 424.1,353.7 425.1,356.3 426.4,357.0 427.0,360.9 428.1,365.5 429.7,364.9 431.6,364.2 433.6,363.5 434.9,364.9 436.0,352.4 436.5,342.5 437.6,341.8 438.9,343.8 441.5,345.1 443.9,345.8 444.8,351.0 445.7,354.3 447.1,355.6 448.1,358.9 449.4,364.2 451.0,363.5 452.7,362.9 453.6,358.9 454.7,352.4 456.0,351.7 457.6,353.7 458.9,355.6 460.0,352.4 461.3,348.4 462.6,345.1 463.7,349.7"/>
</g>
<rect x="388.70" y="379.40" width="12.10" height="9.80" fill="#16182a"/>
<rect x="404.90" y="379.40" width="59.90" height="9.80" fill="#16182a"/>
<text class="m" x="389.30" y="386.80" fill="#dcdcdc" stroke="#dcdcdc">T15</text>
<text class="m" x="405.40" y="386.80" fill="#dcdcdc" stroke="#dcdcdc">U15</text>
<rect x="419.30" y="381.00" width="24.20" height="7.80" fill="#274a7a"/>
<text class="m" x="422.00" y="387.50" fill="#dcdcdc" stroke="#dcdcdc">sync</text>
<rect x="437.70" y="381.00" width="5.80" height="7.80" fill="#30609c"/>
<path d="M439.4 386.2 L440.6 383.4 L441.8 386.2 Z" fill="#dcdcdc"/>
<rect x="447.30" y="381.00" width="17.50" height="7.80" fill="#274a7a"/>
<text class="m" x="455.75" y="387.50" text-anchor="middle" fill="#dcdcdc" stroke="#dcdcdc">10ms</text>
<rect x="468.70" y="328.70" width="12.10" height="50.60" fill="#22355b"/>
<rect x="484.90" y="328.70" width="59.90" height="50.60" fill="#22355b"/>
<svg x="468.70" y="328.7" width="12.1" height="12" viewBox="0 0 12.1 12" overflow="hidden">
<text class="m" x="0.30" y="6.90" fill="#dcdcdc" stroke="#dcdcdc">0.48</text>
</svg>
<rect x="469.90" y="355.40" width="10.00" height="5.60" fill="#3d86e4" rx="0.6"/>
<g stroke="#a0a4aa" stroke-width="0.65" fill="none" stroke-linejoin="round" stroke-linecap="round" stroke-opacity="0.85">
<path d="M487.3 354.3 L543.1 354.3"/>
</g>
<rect x="468.70" y="379.40" width="12.10" height="9.80" fill="#16182a"/>
<rect x="484.90" y="379.40" width="59.90" height="9.80" fill="#16182a"/>
<text class="m" x="469.30" y="386.80" fill="#dcdcdc" stroke="#dcdcdc">X15</text>
<text class="m" x="485.40" y="386.80" fill="#dcdcdc" stroke="#dcdcdc">X15</text>
<rect x="499.30" y="381.00" width="24.20" height="7.80" fill="#274a7a"/>
<text class="m" x="502.00" y="387.50" fill="#dcdcdc" stroke="#dcdcdc">sync</text>
<rect x="517.70" y="381.00" width="5.80" height="7.80" fill="#30609c"/>
<path d="M519.4 386.2 L520.6 383.4 L521.8 386.2 Z" fill="#dcdcdc"/>
<rect x="527.30" y="381.00" width="17.50" height="7.80" fill="#274a7a"/>
<text class="m" x="535.75" y="387.50" text-anchor="middle" fill="#dcdcdc" stroke="#dcdcdc">10ms</text>
</svg></body></html>
